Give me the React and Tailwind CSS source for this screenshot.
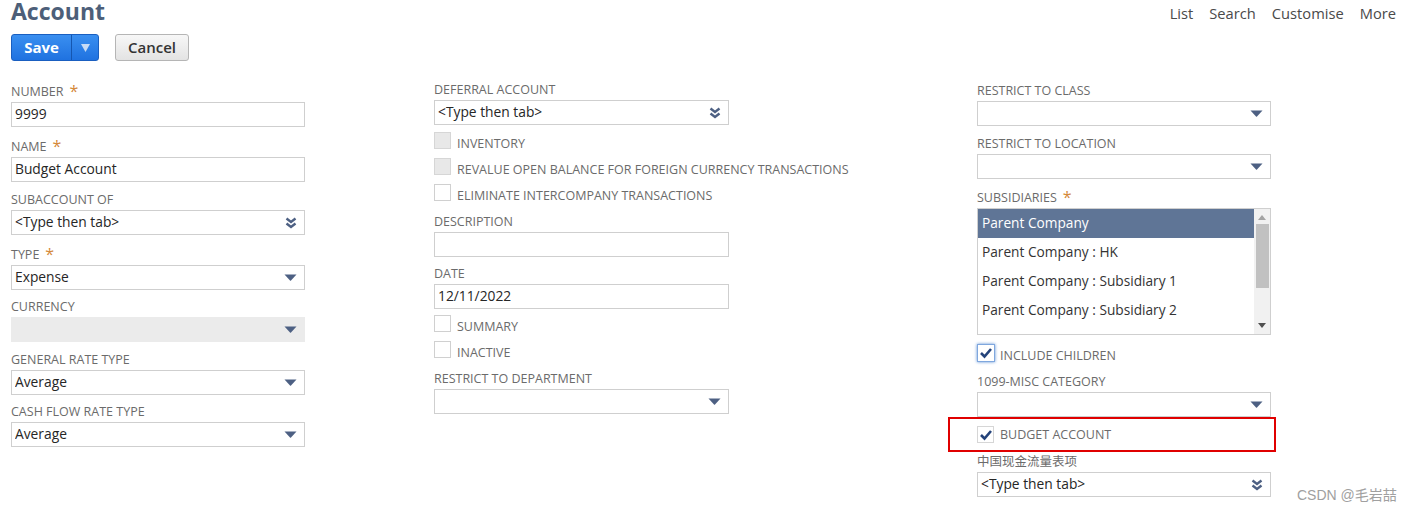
import React from 'react';

const font = { fontFamily: '"Open Sans", "Noto Sans CJK SC", sans-serif' };

function TriangleDown() {
  return (
    <svg width="13" height="7" viewBox="0 0 13 7">
      <path d="M0.5 0.5 H12.5 L7 6.5 Q6.5 7 6 6.5 Z" fill="#4d6083" />
    </svg>
  );
}

function DoubleChevron() {
  return (
    <svg width="12" height="12" viewBox="0 0 12 12">
      <path d="M1.5 1.5 L6 5 L10.5 1.5" fill="none" stroke="#4d6083" strokeWidth="2.4" />
      <path d="M1.5 6.5 L6 10 L10.5 6.5" fill="none" stroke="#4d6083" strokeWidth="2.4" />
    </svg>
  );
}

function Check() {
  return (
    <svg width="14" height="12" viewBox="0 0 14 12">
      <path d="M2 6 L5.5 9.5 L12 2" fill="none" stroke="#24437a" strokeWidth="2.6" />
    </svg>
  );
}

function Label({ text, required, className = '' }) {
  return (
    <div className={`h-[20px] flex items-center whitespace-nowrap text-[12.5px] uppercase text-[#6b6b6b] ${className}`}>
      <span>{text}</span>
      {required && <span className="ml-[6px] text-[16px] leading-[16px] text-[#d4893a] -mt-[2px]">*</span>}
    </div>
  );
}

function Input({ value, icon, disabled }) {
  return (
    <div
      className={`h-[25px] flex items-center justify-between border pl-[3px] pr-[7px] text-[13.8px] text-[#262626] ${
        disabled ? 'bg-[#ebebeb] border-[#ebebeb]' : 'bg-white border-[#cfcfcf]'
      }`}
    >
      <span className="truncate">{value}</span>
      {icon === 'select' && <TriangleDown />}
      {icon === 'lookup' && <DoubleChevron />}
    </div>
  );
}

function Field({ label, required, value, icon, disabled, className = '' }) {
  return (
    <div className={className}>
      <Label text={label} required={required} />
      <Input value={value} icon={icon} disabled={disabled} />
    </div>
  );
}

function CheckRow({ label, disabled, checked }) {
  return (
    <div className="h-[26px] flex items-start">
      <div
        className={`mt-[2px] w-[17px] h-[17px] shrink-0 border flex items-center justify-center ${
          disabled ? 'bg-[#e8e8e8] border-[#d6d6d6]' : 'bg-white border-[#d0d0d0]'
        }`}
      >
        {checked && <Check />}
      </div>
      <span className="ml-[6px] mt-[5px] leading-[18px] whitespace-nowrap text-[12.5px] uppercase text-[#6b6b6b]">{label}</span>
    </div>
  );
}

const subsidiaries = [
  'Parent Company',
  'Parent Company : HK',
  'Parent Company : Subsidiary 1',
  'Parent Company : Subsidiary 2',
];

export default function App() {
  return (
    <div className="relative w-[1413px] h-[511px] bg-white overflow-hidden" style={font}>
      {/* header */}
      <div className="flex justify-between pl-[11px] pr-[17px]">
        <div>
          <h1 className="text-[23px] leading-[22px] font-bold text-[#4d5f79]">Account</h1>
          <div className="flex mt-[12px] gap-[16px]">
            <div className="flex h-[27px] rounded-[3px] border border-[#1a5fc0] bg-gradient-to-b from-[#3a8ff0] to-[#1f72e0] text-white overflow-hidden">
              <span className="w-[59px] flex items-center justify-center text-[15px] font-bold">Save</span>
              <span className="w-[27px] flex items-center justify-center border-l border-[#1556b0]">
                <svg width="9" height="8" viewBox="0 0 9 8">
                  <path d="M0 0 H9 L4.5 8 Z" fill="#c7dbf5" />
                </svg>
              </span>
            </div>
            <div className="h-[27px] w-[74px] flex items-center justify-center rounded-[3px] border border-[#b5b5b5] bg-gradient-to-b from-[#f7f7f7] to-[#e3e3e3] text-[15px] font-semibold text-[#333]">
              Cancel
            </div>
          </div>
        </div>
        <div className="flex gap-[16px] text-[14.7px] text-[#4a4a4a] leading-[26px]">
          <span>List</span>
          <span>Search</span>
          <span>Customise</span>
          <span>More</span>
        </div>
      </div>

      {/* form */}
      <div className="flex pl-[11px] mt-[19px]">
        <div className="w-[294px] pt-[2px]">
          <Field label="Number" required value="9999" />
          <Field label="Name" required value="Budget Account" className="mt-[10px]" />
          <Field label="Subaccount of" value="<Type then tab>" icon="lookup" className="mt-[8px]" />
          <Field label="Type" required value="Expense" icon="select" className="mt-[10px]" />
          <Field label="Currency" value="" icon="select" disabled className="mt-[7px]" />
          <Field label="General rate type" value="Average" icon="select" className="mt-[8px]" />
          <Field label="Cash flow rate type" value="Average" icon="select" className="mt-[7px]" />
        </div>

        <div className="w-[295px] ml-[129px]">
          <Field label="Deferral account" value="<Type then tab>" icon="lookup" />
          <div className="mt-[5px]">
            <CheckRow label="Inventory" disabled />
            <CheckRow label="Revalue open balance for foreign currency transactions" disabled />
            <CheckRow label="Eliminate intercompany transactions" />
          </div>
          <Field label="Description" value="" className="mt-[4px]" />
          <Field label="Date" value="12/11/2022" className="mt-[7px]" />
          <div className="mt-[4px]">
            <CheckRow label="Summary" />
            <CheckRow label="Inactive" />
          </div>
          <Field label="Restrict to department" value="" icon="select" className="mt-[4px]" />
        </div>

        <div className="w-[294px] ml-[248px] pt-[1px]">
          <Field label="Restrict to class" value="" icon="select" />
          <Field label="Restrict to location" value="" icon="select" className="mt-[8px]" />
          <div className="mt-[9px]">
            <Label text="Subsidiaries" required />
            <div className="h-[127px] border border-[#cfcfcf] flex">
              <div className="flex-1">
                {subsidiaries.map((s, i) => (
                  <div
                    key={s}
                    className={`h-[29px] flex items-center pl-[4px] text-[13.7px] ${
                      i === 0 ? 'bg-[#5f7596] text-white' : 'text-[#333]'
                    }`}
                  >
                    {s}
                  </div>
                ))}
              </div>
              <div className="w-[16px] bg-[#f1f1f1] flex flex-col items-center">
                <svg width="8" height="5" viewBox="0 0 8 5" className="mt-[6px]">
                  <path d="M0 5 L4 0 L8 5 Z" fill="#a3a3a3" />
                </svg>
                <div className="w-[13px] h-[64px] bg-[#c1c1c1] mt-[4px]" />
                <div className="flex-1" />
                <svg width="8" height="5" viewBox="0 0 8 5" className="mb-[6px]">
                  <path d="M0 0 L8 0 L4 5 Z" fill="#505050" />
                </svg>
              </div>
            </div>
          </div>
          <div className="h-[37px] flex items-start pt-[9px]">
            <div className="w-[18px] h-[18px] border border-[#7fa7de] shadow-[0_0_3px_#5b8fd6] bg-white flex items-center justify-center">
              <Check />
            </div>
            <span className="ml-[5px] mt-[3px] leading-[18px] text-[12.5px] uppercase text-[#6b6b6b]">Include children</span>
          </div>
          <Field label="1099-MISC Category" value="" icon="select" />
          <div className="h-[35px] -ml-[29px] w-[328px] border-2 border-[#e00000] flex items-center pl-[27px]">
            <div className="w-[17px] h-[17px] border border-[#d6d6d6] bg-white flex items-center justify-center">
              <Check />
            </div>
            <span className="ml-[6px] mt-[2px] text-[12.5px] uppercase text-[#6b6b6b]">Budget Account</span>
          </div>
          <Field label="中国现金流量表项" value="<Type then tab>" icon="lookup" />
        </div>
      </div>

      <div
        className="absolute left-[1297px] top-[485px] text-[14px] text-[#a0a0a0]"
        style={{ fontFamily: '"Liberation Sans", "Noto Sans CJK SC", sans-serif' }}
      >
        CSDN @毛岩喆
      </div>
    </div>
  );
}
